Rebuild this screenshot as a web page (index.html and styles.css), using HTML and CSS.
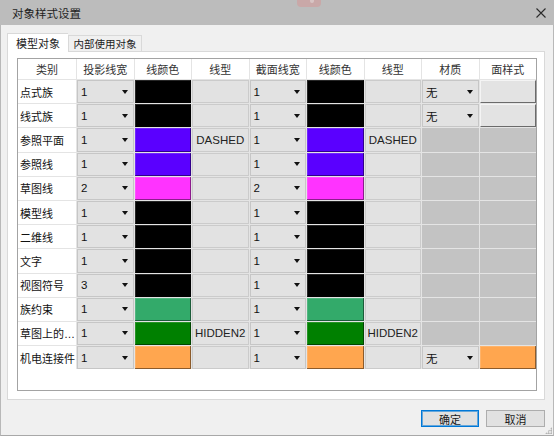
FILE: index.html
```html
<!DOCTYPE html>
<html>
<head>
<meta charset="utf-8">
<link rel="stylesheet" href="styles.css">
</head>
<body>
<div class="window">
  <div class="titlebar">
    <span class="title">对象样式设置</span>
    <div class="ghost"><span class="ghost-dot"></span></div>
    <svg class="close" width="10" height="10" viewBox="0 0 10 10"><path d="M0.5 0.5 L9.5 9.5 M9.5 0.5 L0.5 9.5" stroke="#2b2b2b" stroke-width="1.1" fill="none"/></svg>
  </div>
  <div class="content">
    <div class="tabs">
      <div class="tab active">模型对象</div>
      <div class="tab">内部使用对象</div>
    </div>
    <div class="panel">
      <div class="table">
        <div class="grid">
          <div class="hd">类别</div><div class="hd">投影线宽</div><div class="hd">线颜色</div><div class="hd">线型</div><div class="hd">截面线宽</div><div class="hd">线颜色</div><div class="hd">线型</div><div class="hd">材质</div><div class="hd">面样式</div>

          <div class="name">点式族</div><div class="dd"><span>1</span><i></i></div><div class="clr black"></div><div class="lt"></div><div class="dd"><span>1</span><i></i></div><div class="clr black"></div><div class="lt"></div><div class="dd"><span>无</span><i></i></div><div class="fbtn"></div>

          <div class="name">线式族</div><div class="dd"><span>1</span><i></i></div><div class="clr black"></div><div class="lt"></div><div class="dd"><span>1</span><i></i></div><div class="clr black"></div><div class="lt"></div><div class="dd"><span>无</span><i></i></div><div class="fbtn"></div>

          <div class="name">参照平面</div><div class="dd"><span>1</span><i></i></div><div class="clr purple"></div><div class="lt">DASHED</div><div class="dd"><span>1</span><i></i></div><div class="clr purple"></div><div class="lt">DASHED</div><div class="off"></div><div class="off"></div>

          <div class="name">参照线</div><div class="dd"><span>1</span><i></i></div><div class="clr purple"></div><div class="lt"></div><div class="dd"><span>1</span><i></i></div><div class="clr purple"></div><div class="lt"></div><div class="off"></div><div class="off"></div>

          <div class="name">草图线</div><div class="dd"><span>2</span><i></i></div><div class="clr magenta"></div><div class="lt"></div><div class="dd"><span>2</span><i></i></div><div class="clr magenta"></div><div class="lt"></div><div class="off"></div><div class="off"></div>

          <div class="name">模型线</div><div class="dd"><span>1</span><i></i></div><div class="clr black"></div><div class="lt"></div><div class="dd"><span>1</span><i></i></div><div class="clr black"></div><div class="lt"></div><div class="off"></div><div class="off"></div>

          <div class="name">二维线</div><div class="dd"><span>1</span><i></i></div><div class="clr black"></div><div class="lt"></div><div class="dd"><span>1</span><i></i></div><div class="clr black"></div><div class="lt"></div><div class="off"></div><div class="off"></div>

          <div class="name">文字</div><div class="dd"><span>1</span><i></i></div><div class="clr black"></div><div class="lt"></div><div class="dd"><span>1</span><i></i></div><div class="clr black"></div><div class="lt"></div><div class="off"></div><div class="off"></div>

          <div class="name">视图符号</div><div class="dd"><span>3</span><i></i></div><div class="clr black"></div><div class="lt"></div><div class="dd"><span>1</span><i></i></div><div class="clr black"></div><div class="lt"></div><div class="off"></div><div class="off"></div>

          <div class="name">族约束</div><div class="dd"><span>1</span><i></i></div><div class="clr green"></div><div class="lt"></div><div class="dd"><span>1</span><i></i></div><div class="clr green"></div><div class="lt"></div><div class="off"></div><div class="off"></div>

          <div class="name">草图上的…</div><div class="dd"><span>1</span><i></i></div><div class="clr dgreen"></div><div class="lt">HIDDEN2</div><div class="dd"><span>1</span><i></i></div><div class="clr dgreen"></div><div class="lt">HIDDEN2</div><div class="off"></div><div class="off"></div>

          <div class="name">机电连接件</div><div class="dd"><span>1</span><i></i></div><div class="clr orange"></div><div class="lt"></div><div class="dd"><span>1</span><i></i></div><div class="clr orange"></div><div class="lt"></div><div class="dd"><span>无</span><i></i></div><div class="clr orange"></div>
        </div>
      </div>
    </div>
    <div class="footer">
      <div class="btn default">确定</div>
      <div class="btn">取消</div>
    </div>
  </div>
  <div class="grip"></div>
</div>
</body>
</html>
```
FILE: styles.css
```css
* { box-sizing: border-box; }
html, body { margin: 0; padding: 0; }
body {
  width: 554px;
  height: 436px;
  overflow: hidden;
  font-family: "Liberation Sans", "Noto Sans CJK SC", sans-serif;
  font-size: 11px;
  color: #1a1a1a;
  background: #f0f0f0;
}
.window {
  position: relative;
  width: 554px;
  height: 436px;
  display: flex;
  flex-direction: column;
  background: #f0f0f0;
  border-left: 1px solid #b8b8b8;
  border-right: 1px solid #b8b8b8;
  border-bottom: 1px solid #a8a8a8;
}
.titlebar {
  position: relative;
  height: 25px;
  flex: none;
  margin: 0 -1px;
  background: #bcbcbc;
  display: flex;
  align-items: center;
  padding-left: 12px;
}
.title {
  font-size: 11.5px;
  color: #1e1e1e;
}
.ghost {
  position: absolute;
  left: 297px;
  top: 0;
  width: 24px;
  height: 7px;
  background: #c9a8a8;
  border-radius: 0 0 4px 4px;
}
.ghost-dot {
  position: absolute;
  left: 13px;
  top: 0;
  width: 4px;
  height: 3px;
  background: #d8c4c4;
  border-radius: 0 0 2px 2px;
}
.close {
  position: absolute;
  left: 536px;
  top: 8px;
}
.content {
  flex: 1;
  display: flex;
  flex-direction: column;
  padding: 8px 8px 0 6px;
}
.tabs {
  display: flex;
  align-items: flex-end;
  height: 18px;
  position: relative;
  z-index: 1;
}
.tab {
  height: 16px;
  width: 74px;
  border: 1px solid #d9d9d9;
  border-bottom: none;
  background: #f0f0f0;
  display: flex;
  align-items: center;
  justify-content: center;
  color: #222;
  font-size: 10.5px;
  white-space: nowrap;
}
.tab.active {
  width: 61px;
  height: 19px;
  margin-bottom: -1px;
  background: #ffffff;
  border-right: none;
  padding-bottom: 1px;
  font-size: 11px;
}
.panel {
  height: 349px;
  width: 538px;
  background: #ffffff;
  border: 1px solid #d9d9d9;
  padding: 6px 7px 8px 9px;
  display: flex;
}
.table {
  flex: 1;
  border: 1px solid #a3a3a3;
  background: #ffffff;
}
.grid {
  display: grid;
  grid-template-columns: 58px repeat(8, 1fr);
  grid-template-rows: 20px repeat(12, 23.2px);
  gap: 1px;
  background: #e4e4e4;
}
.hd {
  background: #ffffff;
  display: flex;
  align-items: center;
  justify-content: center;
  color: #333;
}
.name {
  background: #ffffff;
  display: flex;
  align-items: center;
  padding-left: 2px;
  white-space: nowrap;
  overflow: hidden;
  color: #111;
}
.dd {
  position: relative;
  background: #e2e2e2;
  border: 1px solid #c6c6c6;
  display: flex;
  align-items: center;
  padding-left: 3px;
  font-size: 11.5px;
  color: #111;
}
.dd i {
  position: absolute;
  right: 5px;
  top: 50%;
  margin-top: -2px;
  width: 0;
  height: 0;
  border-left: 3.5px solid transparent;
  border-right: 3.5px solid transparent;
  border-top: 4px solid #111;
}
.clr {
  box-shadow: inset -1px -1px 0 rgba(0, 0, 0, 0.45), inset 1px 1px 0 rgba(255, 255, 255, 0.15);
}
.black { background: #000000; }
.purple { background: #5a00ff; }
.magenta { background: #ff33ff; }
.green { background: #33aa6a; }
.dgreen { background: #008000; }
.orange { background: #ffa64f; }
.lt {
  background: #e2e2e2;
  border: 1px solid #cbcbcb;
  display: flex;
  align-items: center;
  justify-content: center;
  font-size: 11.5px;
  color: #222;
}
.off {
  background: #c3c3c3;
}
.fbtn {
  background: #e3e3e3;
  border-top: 1px solid #f4f4f4;
  border-left: 1px solid #f4f4f4;
  border-right: 1px solid #6b6b6b;
  border-bottom: 1px solid #6b6b6b;
}
.footer {
  display: flex;
  justify-content: flex-end;
  gap: 7px;
  padding-top: 10px;
}
.btn {
  width: 59px;
  height: 17px;
  background: #e1e1e1;
  border: 1px solid #adadad;
  display: flex;
  align-items: center;
  justify-content: center;
  color: #1a1a1a;
}
.btn.default {
  width: 58px;
  border: 1px solid #0078d7;
  box-shadow: inset 0 0 0 1px rgba(0, 120, 215, 0.55);
}
.grip {
  position: absolute;
  right: 1px;
  bottom: 1px;
  width: 7px;
  height: 7px;
  background-image: radial-gradient(circle, #a8a8a8 0.8px, transparent 1px);
  background-size: 2.5px 2.5px;
  clip-path: polygon(100% 0, 100% 100%, 0 100%);
}
```
